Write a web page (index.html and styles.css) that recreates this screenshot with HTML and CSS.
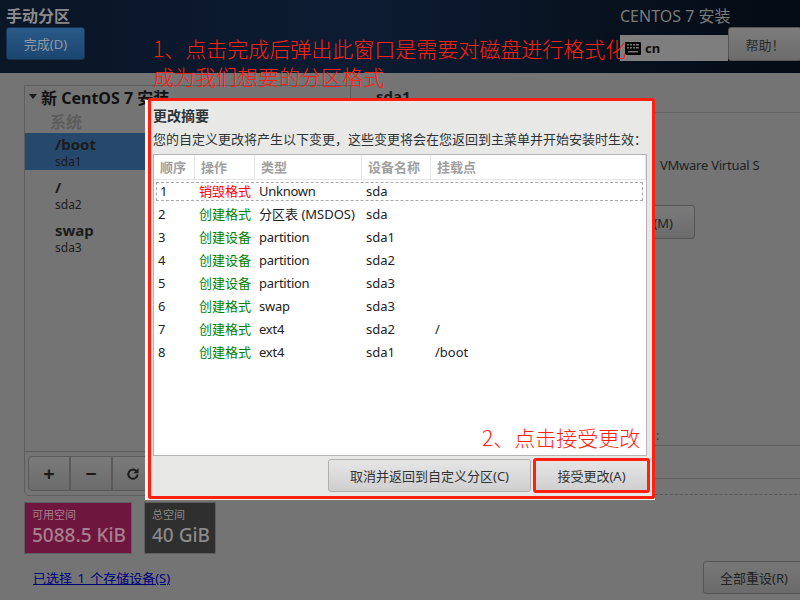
FILE: index.html
```html
<!DOCTYPE html>
<html lang="zh">
<head>
<meta charset="utf-8">
<title>手动分区</title>
<link rel="stylesheet" href="styles.css">
</head>
<body>
<div class="screen">
  <header class="topbar">
    <div class="top-left">
      <div class="spoke-title">手动分区</div>
      <button class="btn-done">完成(D)</button>
    </div>
    <div class="top-right">
      <div class="product">CENTOS 7 安装</div>
      <div class="top-controls">
        <div class="kbd">
          <svg class="kbd-icon" width="16" height="13" viewBox="0 0 16 13"><rect width="16" height="13" rx="1" fill="#000"/><g fill="#777"><rect x="2" y="2" width="2" height="1.5"/><rect x="5" y="2" width="2" height="1.5"/><rect x="8" y="2" width="2" height="1.5"/><rect x="11" y="2" width="3" height="1.5"/><rect x="2" y="5" width="2" height="1.5"/><rect x="5" y="5" width="2" height="1.5"/><rect x="8" y="5" width="2" height="1.5"/><rect x="11" y="5" width="3" height="1.5"/><rect x="3" y="9" width="10" height="1.5"/></g></svg>
          <span>cn</span>
        </div>
        <button class="btn-help">帮助！</button>
      </div>
    </div>
  </header>
  <main class="content">
    <section class="left">
      <div class="tree">
        <div class="tree-body">
          <div class="tree-head"><span class="arrow"></span>新 CentOS 7 安装</div>
          <div class="group">系统</div>
          <div class="mount sel"><div class="m-name">/boot</div><div class="m-dev">sda1</div></div>
          <div class="mount"><div class="m-name">/</div><div class="m-dev">sda2</div></div>
          <div class="mount"><div class="m-name">swap</div><div class="m-dev">sda3</div></div>
        </div>
        <div class="toolbar">
          <button class="tool">+</button><button class="tool">−</button><button class="tool"><svg width="14" height="14" viewBox="0 0 14 14"><path d="M11.5 7.5a4.6 4.6 0 1 1-1.4-3.6" fill="none" stroke="#1c1c1c" stroke-width="2"/><path d="M12.5 1v5.2H7.3z" fill="#1c1c1c"/></svg></button>
        </div>
      </div>
      <div class="chips">
        <div class="chip pink"><div class="chip-l">可用空间</div><div class="chip-v">5088.5 KiB</div></div>
        <div class="chip dark"><div class="chip-l">总空间</div><div class="chip-v">40 GiB</div></div>
      </div>
      <a class="link">已选择 1 个存储设备(S)</a>
    </section>
    <section class="right">
      <div class="r-title">sda1</div>
      <div class="r-device lt">VMware Virtual S</div>
      <button class="btn-modify">修改...(M)</button>
      <div class="r-label">:</div>
      <div class="r-input"></div>
      <div class="r-dash"></div>
      <button class="btn-reset">全部重设(R)</button>
    </section>
  </main>

  <div class="dialog">
    <div class="dialog-frame">
      <div class="d-title">更改摘要</div>
      <div class="d-desc">您的自定义更改将产生以下变更，这些变更将会在您返回到主菜单并开始安装时生效：</div>
      <div class="d-table">
        <div class="row head"><span>顺序</span><span>操作</span><span>类型</span><span>设备名称</span><span>挂载点</span></div>
        <div class="row focus"><span>1</span><span class="red">销毁格式</span><span class="lt">Unknown</span><span>sda</span><span></span></div>
        <div class="row"><span>2</span><span class="green">创建格式</span><span>分区表 (MSDOS)</span><span>sda</span><span></span></div>
        <div class="row"><span>3</span><span class="green">创建设备</span><span class="lt">partition</span><span>sda1</span><span></span></div>
        <div class="row"><span>4</span><span class="green">创建设备</span><span class="lt">partition</span><span>sda2</span><span></span></div>
        <div class="row"><span>5</span><span class="green">创建设备</span><span class="lt">partition</span><span>sda3</span><span></span></div>
        <div class="row"><span>6</span><span class="green">创建格式</span><span class="lt">swap</span><span>sda3</span><span></span></div>
        <div class="row"><span>7</span><span class="green">创建格式</span><span class="lt">ext4</span><span>sda2</span><span>/</span></div>
        <div class="row"><span>8</span><span class="green">创建格式</span><span class="lt">ext4</span><span>sda1</span><span>/boot</span></div>
      </div>
      <div class="d-actions">
        <button class="d-btn cancel">取消并返回到自定义分区(C)</button>
        <button class="d-btn accept">接受更改(A)</button>
      </div>
    </div>
  </div>

  <div class="note note-1">1、点击完成后弹出此窗口是需要对磁盘进行格式化<br>成为我们想要的分区格式</div>
  <div class="note note-2">2、点击接受更改</div>
</div>
</body>
</html>
```
FILE: styles.css
```css
* { box-sizing: border-box; }
html, body { margin: 0; padding: 0; }
body { width: 800px; height: 600px; overflow: hidden; font-family: "Noto Sans", "Noto Sans CJK SC", sans-serif; font-size: 13px; color: #1c1c1c; }
button { font-family: inherit; padding: 0; }
.lt { letter-spacing: -0.25px; }
.screen { position: relative; width: 800px; height: 600px; background: #747474; display: flex; flex-direction: column; overflow: hidden; }

.topbar { height: 73px; flex: none; display: flex; justify-content: space-between; background: linear-gradient(90deg, #0a1525 0%, #0d1c33 45%, #07101c 80%, #050b14 100%); }
.top-left { padding: 6px 0 0 6px; }
.spoke-title { font-size: 16px; font-weight: bold; line-height: 20px; color: #8a8a8a; }
.btn-done { display: block; width: 79px; height: 33px; margin-top: 1px; border: 1px solid #163250; border-radius: 3px; background: linear-gradient(#2a5a88, #1b4670); color: #8e9aa6; font-size: 13px; }
.top-right { width: 180px; padding-top: 6px; }
.product { font-size: 16px; line-height: 20px; color: #7b7b7b; }
.top-controls { display: flex; margin-top: 9px; }
.kbd { width: 108px; height: 26px; flex: none; background: #7e7e7e; display: flex; align-items: center; gap: 4px; padding-left: 5px; font-weight: bold; font-size: 13px; color: #111; }
.btn-help { width: 74px; height: 34px; margin-top: -8px; border: 1px solid #555; border-radius: 3px; background: linear-gradient(#7c7c7c, #6c6c6c); color: #2a2a2a; font-size: 13px; flex: none; }

.content { flex: 1; display: flex; min-height: 0; }
.left { width: 351px; flex: none; padding: 12px 0 0 24px; }
.tree { height: 411px; width: 327px; border: 1px solid #5e5e5e; border-radius: 0 0 5px 5px; display: flex; flex-direction: column; }
.tree-body { flex: 1; }
.tree-head { height: 21px; font-size: 16px; font-weight: bold; display: flex; align-items: center; padding-left: 4px; color: #111; }
.arrow { width: 0; height: 0; border: 4px solid transparent; border-top: 5px solid #1c1c1c; border-bottom: 0; margin-right: 4px; }
.group { font-size: 16px; font-weight: bold; color: #5d5d5d; padding-left: 25px; height: 22px; line-height: 22px; margin-top: 4px; }
.mount { height: 43px; padding: 7px 0 0 30px; }
.mount.sel { height: 37px; padding-top: 1px; background: #27486d; }
.m-name { font-size: 15px; font-weight: bold; line-height: 20px; color: #1c1c1c; }
.m-dev { font-size: 12px; line-height: 16px; color: #1c1c1c; }
.toolbar { height: 44px; flex: none; border-top: 1px solid #5e5e5e; padding: 4px 3px; display: flex; }
.tool { width: 42px; height: 35px; border: 1px solid #5a5a5a; background: linear-gradient(#7a7a7a, #6c6c6c); font-size: 20px; font-weight: bold; color: #1c1c1c; display: flex; align-items: center; justify-content: center; }
.tool:first-child { border-radius: 4px 0 0 4px; }
.chips { display: flex; gap: 12px; margin-top: 6px; }
.chip { height: 52px; border: 1px solid #5e5e5e; padding: 4px 7px; white-space: nowrap; }
.chip.pink { width: 108px; background: #6f163e; color: #a77f90; }
.chip.dark { width: 72px; background: #2f2f2f; color: #8a8a8a; }
.chip-l { font-size: 11px; line-height: 16px; }
.chip-v { font-size: 19px; line-height: 24px; font-weight: 500; }
.link { display: block; margin: 15px 0 0 9px; color: #00007f; text-decoration: underline; font-size: 13px; line-height: 18px; word-spacing: 2px; }

.right { flex: 1; padding: 12px 17px 0 25px; display: flex; flex-direction: column; }
.r-title { font-size: 15px; font-weight: bold; line-height: 22px; height: 28px; border-bottom: 1px solid #656565; color: #1c1c1c; flex: none; }
.r-device { margin: 43px 0 0 284px; white-space: nowrap; font-size: 13px; line-height: 18px; color: #222; flex: none; }
.btn-modify { width: 100px; height: 34px; margin: 31px 0 0 219px; border: 1px solid #555; border-radius: 3px; background: linear-gradient(#7a7a7a, #6c6c6c); color: #222; font-size: 13px; flex: none; }
.r-label { margin: 186px 0 0 280px; height: 20px; line-height: 20px; color: #3a3a3a; flex: none; }
.r-input { margin: 0 0 0 274px; height: 34px; border: 1px solid #5e5e5e; border-radius: 3px; flex: none; }
.r-dash { margin: 15px -17px 0 274px; border-top: 1px dashed #5a5a5a; flex: none; }
.btn-reset { width: 102px; height: 33px; margin: 66px 0 0 327px; flex: none; border: 1px solid #555; border-radius: 3px; background: linear-gradient(#777, #6b6b6b); color: #222; font-size: 13px; }

.dialog { position: absolute; left: 145px; top: 100px; width: 510px; height: 400px; background: #f1f1f1; padding-left: 3px; }
.dialog-frame { position: relative; top: -2px; height: 401px; background: #e8e8e7; border: 3px solid #ff2010; border-radius: 2px; padding: 7px 2px 0; color: #2e3436; }
.d-title { font-size: 14px; font-weight: bold; line-height: 16px; }
.d-desc { line-height: 16px; margin-top: 7px; white-space: nowrap; }
.d-table { height: 302px; margin-top: 7px; background: #fff; border: 1px solid #b4b4b4; width: 494px; }
.row { display: grid; grid-template-columns: 41px 60px 107px 69px 1fr; height: 23px; line-height: 23px; color: #222; }
.row span { padding-left: 4px; white-space: nowrap; }
.row.head { height: 25px; line-height: 24px; font-weight: bold; color: #a0a0a0; border-bottom: 1px solid #e5e5e5; margin-bottom: 2px; }
.row.head span { border-right: 1px solid #e5e5e5; padding-left: 6px; }
.row.focus { outline: 1px dashed #aaa; outline-offset: -1px; margin: 0 3px 2px 2px; grid-template-columns: 39px 60px 107px 69px 1fr; height: 19px; line-height: 19px; }
.red { color: #ff0000; }
.green { color: #008000; }
.d-actions { display: flex; justify-content: flex-end; gap: 2px; margin-top: 3px; }
.d-btn { height: 33px; border: 1px solid #b0b0b0; border-radius: 3px; background: linear-gradient(#e6e6e6, #cfcfcf); color: #333; font-size: 13px; }
.cancel { width: 203px; }
.accept { width: 117px; border: 3px solid #ff2010; height: 35px; margin-top: -1px; }

.note { position: absolute; color: #ff2010; font-family: "Noto Sans CJK SC", sans-serif; font-weight: 300; font-size: 21px; line-height: 28px; white-space: nowrap; }
.note-1 { left: 153px; top: 34px; }
.note-2 { left: 482px; top: 423px; }
```
